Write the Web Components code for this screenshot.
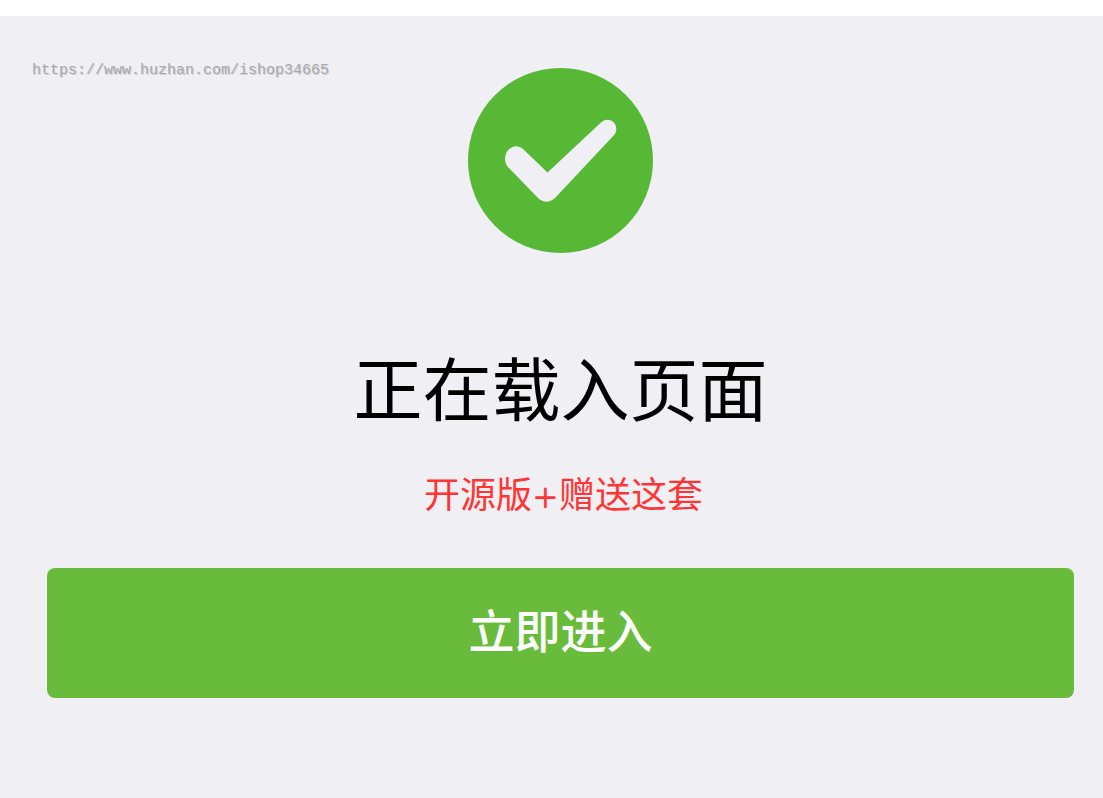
<!DOCTYPE html>
<html lang="zh-CN">
<head>
<meta charset="utf-8">
<meta name="viewport" content="width=device-width, initial-scale=1">
<title>正在载入页面</title>
<style>
body { margin: 0; background: #efeff4; font-family: "Noto Sans CJK SC", sans-serif; }
</style>
</head>
<body>
<loading-page>
  <site-mark slot="mark">https://www.huzhan.com/ishop34665</site-mark>
  <success-icon slot="icon"></success-icon>
  <status-message slot="message">正在载入页面<span slot="note">开源版<plus-sign>+</plus-sign>赠送这套</span></status-message>
  <enter-button slot="action">立即进入</enter-button>
</loading-page>
<script>
function define(name, html) {
  const template = document.createElement('template');
  template.innerHTML = html;
  customElements.define(name, class extends HTMLElement {
    constructor() {
      super();
      this.attachShadow({ mode: 'open' }).append(template.content.cloneNode(true));
    }
  });
}

define('loading-page', `
  <style>
    :host { display: block; position: relative; min-height: 100vh; box-sizing: border-box; border-top: 16px solid #fff; background: #efeff4; }
    main { display: flex; flex-direction: column; align-items: center; padding: 52px 29px 48px 47px; }
    ::slotted([slot=mark]) { position: absolute; left: 32px; top: 45px; }
    ::slotted([slot=message]) { margin-top: 92px; }
    ::slotted([slot=action]) { align-self: stretch; margin-top: 52px; }
  </style>
  <slot name="mark"></slot>
  <main><slot name="icon"></slot><slot name="message"></slot><slot name="action"></slot></main>`);

define('site-mark', `
  <style>
    :host { display: block; font: 15px/20px "Liberation Mono", monospace; color: #a8a8aa; text-shadow: 1px 1px #d0d0d3; }
  </style>
  <slot></slot>`);

define('success-icon', `
  <style>
    :host { display: block; width: 186px; height: 186px; }
    svg { display: block; width: 100%; height: 100%; }
  </style>
  <svg viewBox="0 0 186 186" role="img" aria-label="成功">
    <circle cx="92.5" cy="92.5" r="92.5" fill="#57b835"/>
    <path fill="#efeff4" d="M55 81 L79.500 104.500 L133 54.500 C142 47 152 57 147 66 L88 129 Q79 138 70 130 L39 98 C32 86 45 72 55 81 Z"/>
  </svg>`);

define('status-message', `
  <style>
    :host { display: block; text-align: center; }
    h1 { margin: 0; font-size: 69px; line-height: 80px; font-weight: 400; color: #000; }
    p { margin: 42px 0 0; padding-left: 6px; font-size: 36px; line-height: 48px; color: #ff3535; text-autospace: no-autospace; }
  </style>
  <h1><slot></slot></h1>
  <p><slot name="note"></slot></p>`);

define('plus-sign', `
  <style>
    :host { display: inline-block; font-family: "DejaVu Sans", sans-serif; font-size: 32px; line-height: 1; }
  </style>
  <slot></slot>`);

define('enter-button', `
  <style>
    :host { display: block; }
    button { display: block; width: 100%; margin: 0; padding: 28px 16px 38px; border: 0; border-radius: 8px; background: #69bc3b; color: #fff; font: 500 46px/64px "Noto Sans CJK SC", sans-serif; cursor: pointer; }
  </style>
  <button type="button"><slot></slot></button>`);
</script>
</body>
</html>
